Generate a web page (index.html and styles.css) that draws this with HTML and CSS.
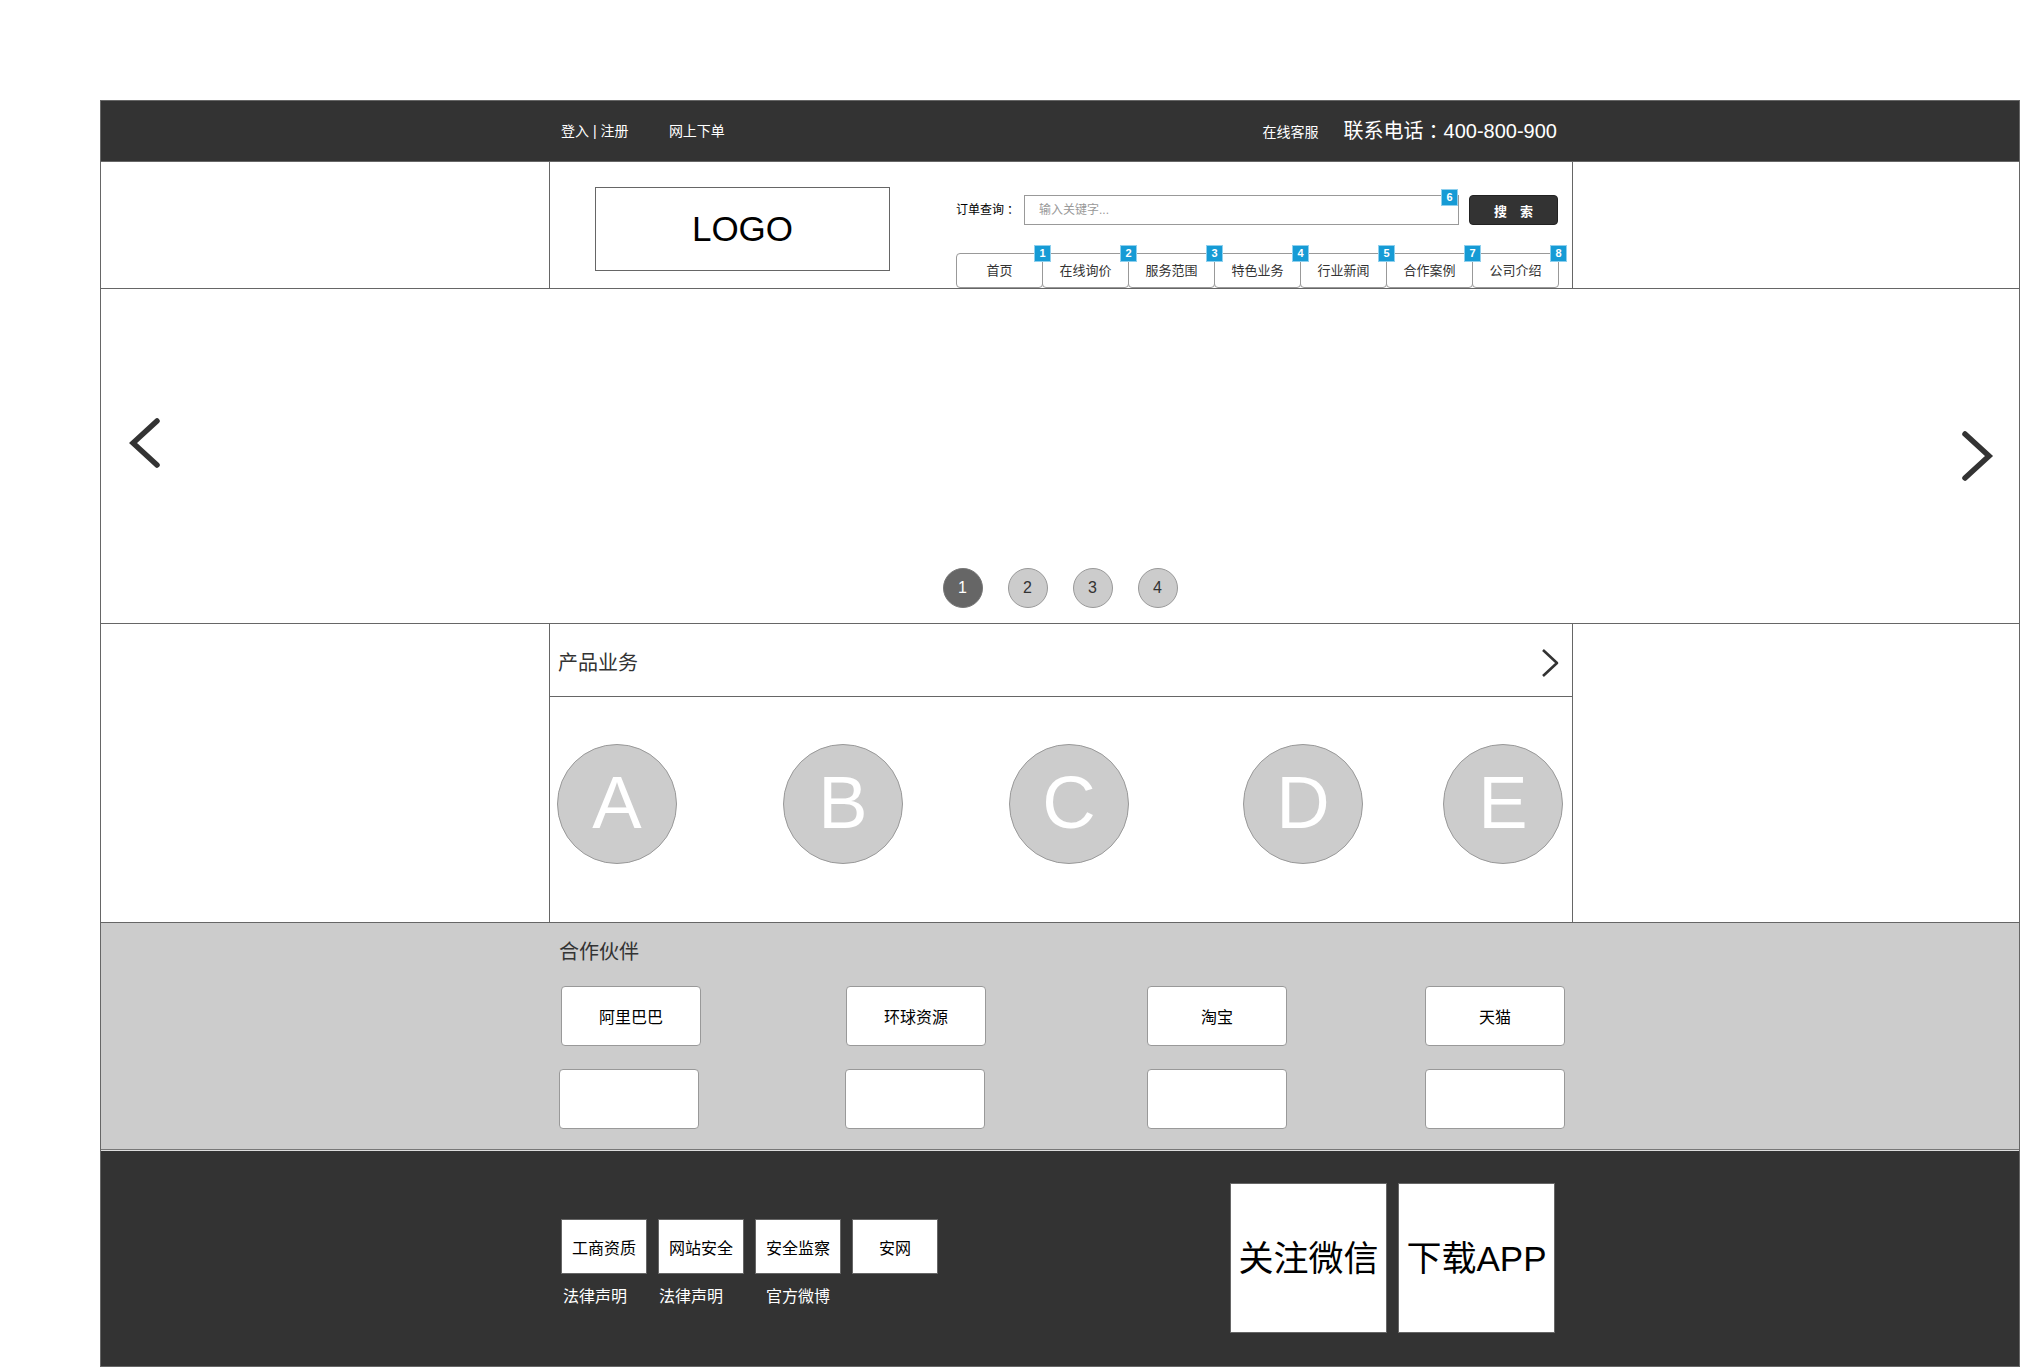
FILE: index.html
```html
<!DOCTYPE html>
<html lang="zh-CN">
<head>
<meta charset="utf-8">
<title>首页</title>
<link rel="stylesheet" href="styles.css">
</head>
<body>
<div class="page">
  <div class="topbar">
    <div class="col topbar-inner">
      <div class="top-left">
        <span class="top-link">登入 | 注册</span>
        <span class="top-link order">网上下单</span>
      </div>
      <div class="top-right">
        <span class="service">在线客服</span>
        <span class="phone">联系电话<span class="colon">：</span>400-800-900</span>
      </div>
    </div>
  </div>

  <div class="header">
    <div class="col bordered header-inner">
      <div class="logo">LOGO</div>
      <div class="header-right">
        <div class="search-row">
          <span class="search-label">订单查询<span class="colon">：</span></span>
          <div class="search-box">
            <input class="search-input" type="text" placeholder="输入关键字...">
            <span class="badge badge-input">6</span>
          </div>
          <button class="search-btn">搜　索</button>
        </div>
        <ul class="nav">
          <li class="tab">首页<span class="badge">1</span></li>
          <li class="tab">在线询价<span class="badge">2</span></li>
          <li class="tab">服务范围<span class="badge">3</span></li>
          <li class="tab">特色业务<span class="badge">4</span></li>
          <li class="tab">行业新闻<span class="badge">5</span></li>
          <li class="tab">合作案例<span class="badge">7</span></li>
          <li class="tab">公司介绍<span class="badge">8</span></li>
        </ul>
      </div>
    </div>
  </div>

  <div class="carousel">
    <svg class="arrow arrow-left" width="34" height="54" viewBox="0 0 34 54"><polyline points="28,4 4,26 28,48" fill="none" stroke="#333" stroke-width="5.5" stroke-linecap="round" stroke-linejoin="miter"/></svg>
    <svg class="arrow arrow-right" width="34" height="54" viewBox="0 0 34 54"><polyline points="4,4 28,26 4,48" fill="none" stroke="#333" stroke-width="5.5" stroke-linecap="round" stroke-linejoin="miter"/></svg>
    <div class="dots">
      <span class="dot active">1</span>
      <span class="dot">2</span>
      <span class="dot">3</span>
      <span class="dot">4</span>
    </div>
  </div>

  <div class="products">
    <div class="col bordered products-inner">
      <div class="products-head">
        <span class="section-title">产品业务</span>
        <svg class="more" width="20" height="30" viewBox="0 0 20 30"><polyline points="3,2 17,15 3,28" fill="none" stroke="#333" stroke-width="2.6" stroke-linejoin="round"/></svg>
      </div>
      <div class="products-body">
        <div class="circle c-a">A</div>
        <div class="circle c-b">B</div>
        <div class="circle c-c">C</div>
        <div class="circle c-d">D</div>
        <div class="circle c-e">E</div>
      </div>
    </div>
  </div>

  <div class="partners">
    <div class="col partners-inner">
      <div class="partners-title">合作伙伴</div>
      <div class="partner-row row-1">
        <div class="partner p1">阿里巴巴</div>
        <div class="partner p2">环球资源</div>
        <div class="partner p3">淘宝</div>
        <div class="partner p4">天猫</div>
      </div>
      <div class="partner-row row-2">
        <div class="partner p1"></div>
        <div class="partner p2"></div>
        <div class="partner p3"></div>
        <div class="partner p4"></div>
      </div>
    </div>
  </div>

  <div class="footer">
    <div class="col footer-inner">
      <div class="footer-left">
        <div class="cert-row">
          <div class="cert">工商资质</div>
          <div class="cert">网站安全</div>
          <div class="cert">安全监察</div>
          <div class="cert">安网</div>
        </div>
        <div class="link-row">
          <span class="flink l1">法律声明</span>
          <span class="flink l2">法律声明</span>
          <span class="flink l3">官方微博</span>
        </div>
      </div>
      <div class="footer-right">
        <div class="qr">关注微信</div>
        <div class="qr">下载APP</div>
      </div>
    </div>
  </div>
</div>
</body>
</html>
```

FILE: styles.css
```css
* {
  box-sizing: border-box;
  margin: 0;
  padding: 0;
}

html, body {
  width: 2020px;
  height: 1367px;
  overflow: hidden;
  background: #fff;
}

body {
  font-family: "Liberation Sans", "Noto Sans CJK SC", sans-serif;
  color: #333;
}

.page {
  margin: 100px 0 0 100px;
  width: 1920px;
  border: 1px solid #666;
  border-bottom: 0;
}

.col {
  width: 1024px;
  margin-left: 448px;
}

.bordered {
  border-left: 1px solid #666;
  border-right: 1px solid #666;
}

.colon {
  font-feature-settings: "halt" 1;
  padding: 0 0.25em;
}

/* top bar */
.topbar {
  height: 61px;
  background: #333;
  border-bottom: 1px solid #666;
}

.topbar-inner {
  height: 60px;
  display: flex;
  align-items: center;
  justify-content: space-between;
  padding: 0 16px 0 12px;
  color: #fff;
}

.top-link {
  font-size: 14px;
  line-height: 20px;
  padding-top: 2px;
}

.top-link.order {
  margin-left: 36px;
}

.top-right {
  display: flex;
  align-items: center;
}

.service {
  font-size: 14px;
  line-height: 20px;
  padding-top: 2px;
}

.phone {
  font-size: 20px;
  line-height: 26px;
  margin-left: 25px;
}

/* header */
.header {
  height: 127px;
  border-bottom: 1px solid #666;
}

.header-inner {
  height: 126px;
  display: flex;
  align-items: flex-start;
}

.logo {
  margin: 25px 0 0 45px;
  width: 295px;
  height: 84px;
  border: 1px solid #666;
  display: flex;
  align-items: center;
  justify-content: center;
  font-size: 35px;
  color: #000;
}

.header-right {
  margin-left: 66px;
}

.search-row {
  margin-top: 33px;
  height: 30px;
  display: flex;
  align-items: center;
}

.search-label {
  font-size: 12px;
  line-height: 16px;
  color: #000;
  width: 68px;
  white-space: nowrap;
}

.search-box {
  position: relative;
  width: 435px;
  height: 30px;
}

.search-input {
  width: 100%;
  height: 100%;
  border: 1px solid #999;
  padding: 0 14px;
  font-family: "Liberation Sans", "Noto Sans CJK SC", sans-serif;
  font-size: 12px;
  color: #333;
  outline: none;
}

.search-input::placeholder {
  color: #999;
}

.search-btn {
  margin-left: 10px;
  width: 89px;
  height: 30px;
  background: #333;
  border: 1px solid #222;
  border-radius: 4px;
  color: #fff;
  font-family: "Liberation Sans", "Noto Sans CJK SC", sans-serif;
  font-size: 13px;
  font-weight: bold;
}

.badge {
  position: absolute;
  top: -9px;
  right: -9px;
  width: 17px;
  height: 17px;
  background: #169bd5;
  border: 1px solid #8fd0ee;
  color: #fff;
  font-family: "Liberation Sans", sans-serif;
  font-size: 11px;
  font-weight: bold;
  line-height: 15px;
  text-align: center;
  z-index: 2;
}

.badge-input {
  top: -6px;
  right: 1px;
}

.nav {
  list-style: none;
  display: flex;
  margin-top: 28px;
}

.tab {
  position: relative;
  width: 87px;
  height: 35px;
  border: 1px solid #999;
  border-radius: 4px;
  background: #fff;
  font-size: 13px;
  line-height: 33px;
  text-align: center;
  color: #333;
}

.tab + .tab {
  margin-left: -1px;
}

/* carousel */
.carousel {
  position: relative;
  height: 335px;
  border-bottom: 1px solid #666;
  display: flex;
  align-items: flex-end;
  justify-content: center;
  padding-bottom: 15px;
}

.arrow {
  position: absolute;
}

.arrow-left {
  left: 28px;
  top: 128px;
}

.arrow-right {
  left: 1860px;
  top: 141px;
}

.dots {
  display: flex;
  gap: 25px;
}

.dot {
  width: 40px;
  height: 40px;
  border-radius: 50%;
  background: #ccc;
  border: 1px solid #999;
  color: #333;
  font-size: 16px;
  line-height: 38px;
  text-align: center;
}

.dot.active {
  background: #666;
  border-color: #777;
  color: #fff;
}

/* products */
.products {
  height: 299px;
  border-bottom: 1px solid #666;
}

.products-inner {
  height: 298px;
}

.products-head {
  height: 73px;
  border-bottom: 1px solid #666;
  display: flex;
  align-items: center;
  justify-content: space-between;
  padding: 6px 12px 0 8px;
}

.section-title {
  font-size: 20px;
  line-height: 24px;
  color: #333;
}

.products-body {
  display: flex;
  padding-top: 47px;
}

.circle {
  width: 120px;
  height: 120px;
  border-radius: 50%;
  background: #ccc;
  border: 1px solid #999;
  color: #fff;
  font-size: 74px;
  line-height: 116px;
  text-align: center;
}

.c-a { margin-left: 7px; }
.c-b { margin-left: 106px; }
.c-c { margin-left: 106px; }
.c-d { margin-left: 114px; }
.c-e { margin-left: 80px; }

/* partners */
.partners {
  height: 227px;
  background: #ccc;
  border-bottom: 1px solid #777;
}

.partners-inner {
  padding-top: 17px;
}

.partners-title {
  font-size: 20px;
  line-height: 24px;
  color: #333;
  padding-left: 10px;
}

.partner-row {
  display: flex;
}

.row-1 {
  margin-top: 22px;
  padding-left: 12px;
}

.row-2 {
  margin-top: 23px;
  padding-left: 10px;
}

.partner {
  width: 140px;
  height: 60px;
  background: #fff;
  border: 1px solid #999;
  border-radius: 4px;
  display: flex;
  align-items: center;
  justify-content: center;
  font-size: 16px;
  color: #000;
}

.row-1 .p2 { margin-left: 145px; }
.row-1 .p3 { margin-left: 161px; }
.row-1 .p4 { margin-left: 138px; }
.row-2 .p2 { margin-left: 146px; }
.row-2 .p3 { margin-left: 162px; }
.row-2 .p4 { margin-left: 138px; }

/* footer */
.footer {
  height: 217px;
  background: #333;
  border-top: 1px solid #ddd;
  border-bottom: 1px solid #666;
}

.footer-inner {
  display: flex;
  align-items: flex-start;
}

.footer-left {
  margin: 68px 0 0 12px;
}

.cert-row {
  display: flex;
  gap: 11px;
}

.cert {
  width: 86px;
  height: 55px;
  background: #fff;
  border: 1px solid #666;
  display: flex;
  align-items: center;
  justify-content: center;
  font-size: 16px;
  color: #000;
}

.link-row {
  display: flex;
  margin-top: 13px;
}

.flink {
  font-size: 16px;
  line-height: 20px;
  color: #fff;
}

.l1 { margin-left: 2px; }
.l2 { margin-left: 32px; }
.l3 { margin-left: 43px; }

.footer-right {
  margin: 32px 18px 0 auto;
  display: flex;
  gap: 11px;
}

.qr {
  width: 157px;
  height: 150px;
  background: #fff;
  border: 1px solid #666;
  display: flex;
  align-items: center;
  justify-content: center;
  font-size: 35px;
  color: #000;
  white-space: nowrap;
  padding-bottom: 6px;
}
```
